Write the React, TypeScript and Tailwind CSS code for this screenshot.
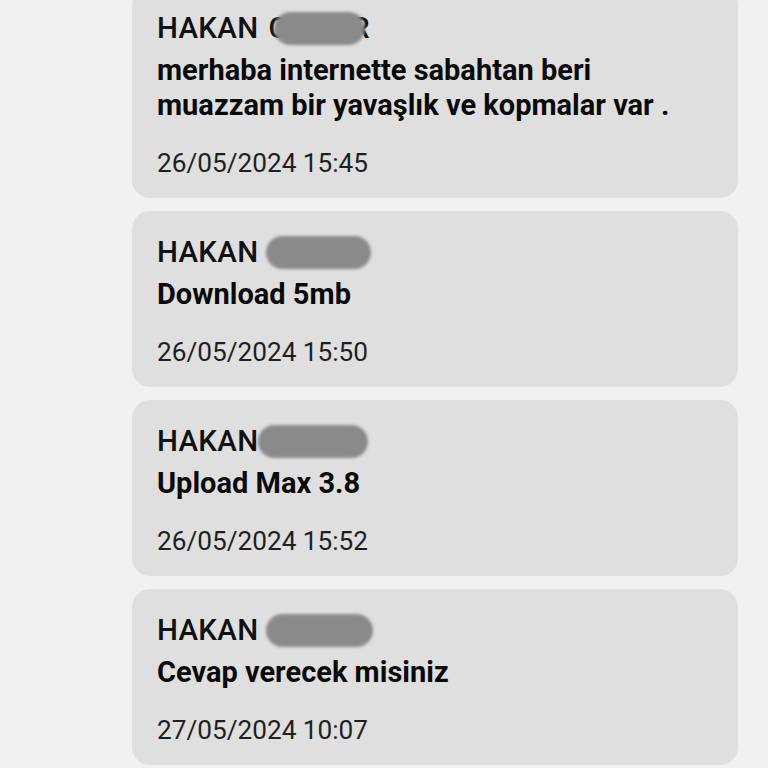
import React from 'react'

interface Msg {
  text: string
  date: string
  blob: { ml: number; w: number; prefix?: string; suffix?: string }
}

const MESSAGES: Msg[] = [
  {
    text: 'merhaba internette sabahtan beri muazzam bir yavaşlık ve kopmalar var .',
    date: '26/05/2024 15:45',
    blob: { ml: -14, w: 91, prefix: 'C', suffix: 'R' },
  },
  { text: 'Download 5mb', date: '26/05/2024 15:50', blob: { ml: 8, w: 105 } },
  { text: 'Upload Max 3.8', date: '26/05/2024 15:52', blob: { ml: 0, w: 110 } },
  { text: 'Cevap verecek misiniz', date: '27/05/2024 10:07', blob: { ml: 8, w: 107 } },
]

function NameBlob({ blob }: { blob: Msg['blob'] }) {
  return (
    <span className="inline-flex items-center">
      {blob.prefix && <span className="ml-[10px] text-[#111]">{blob.prefix}</span>}
      <span
        className="relative z-10 inline-block h-[33px] rounded-full bg-[#8a8a8a] blur-[1.5px]"
        style={{ width: blob.w, marginLeft: blob.ml }}
      />
      {blob.suffix && <span className="-ml-[14px] text-[#111]">{blob.suffix}</span>}
    </span>
  )
}

function MessageCard({ msg }: { msg: Msg }) {
  return (
    <div className="rounded-[18px] bg-[#dfdfdf] pl-[25px] pr-[40px] pt-[23px] pb-[17px]">
      <div className="flex items-center text-[29.5px] leading-[36px] font-medium tracking-[0.3px] text-[#111]">
        <span>HAKAN</span>
        <NameBlob blob={msg.blob} />
      </div>
      <div className="mt-[7px] max-w-[540px] text-[29px] leading-[35px] font-bold text-[#0a0a0a]">
        {msg.text}
      </div>
      <div className="mt-[22px] text-[26.2px] leading-[36px] text-[#1f1f1f]">{msg.date}</div>
    </div>
  )
}

export default function App() {
  return (
    <div
      className="h-[768px] w-[768px] overflow-hidden bg-[#f1f1f1]"
      style={{ fontFamily: 'Roboto, "Noto Sans", sans-serif' }}
    >
      <div className="ml-[132px] mr-[30px] -mt-[13px] flex flex-col gap-[13px]">
        {MESSAGES.map(function (m, i) {
          return <MessageCard key={i} msg={m} />
        })}
      </div>
    </div>
  )
}
